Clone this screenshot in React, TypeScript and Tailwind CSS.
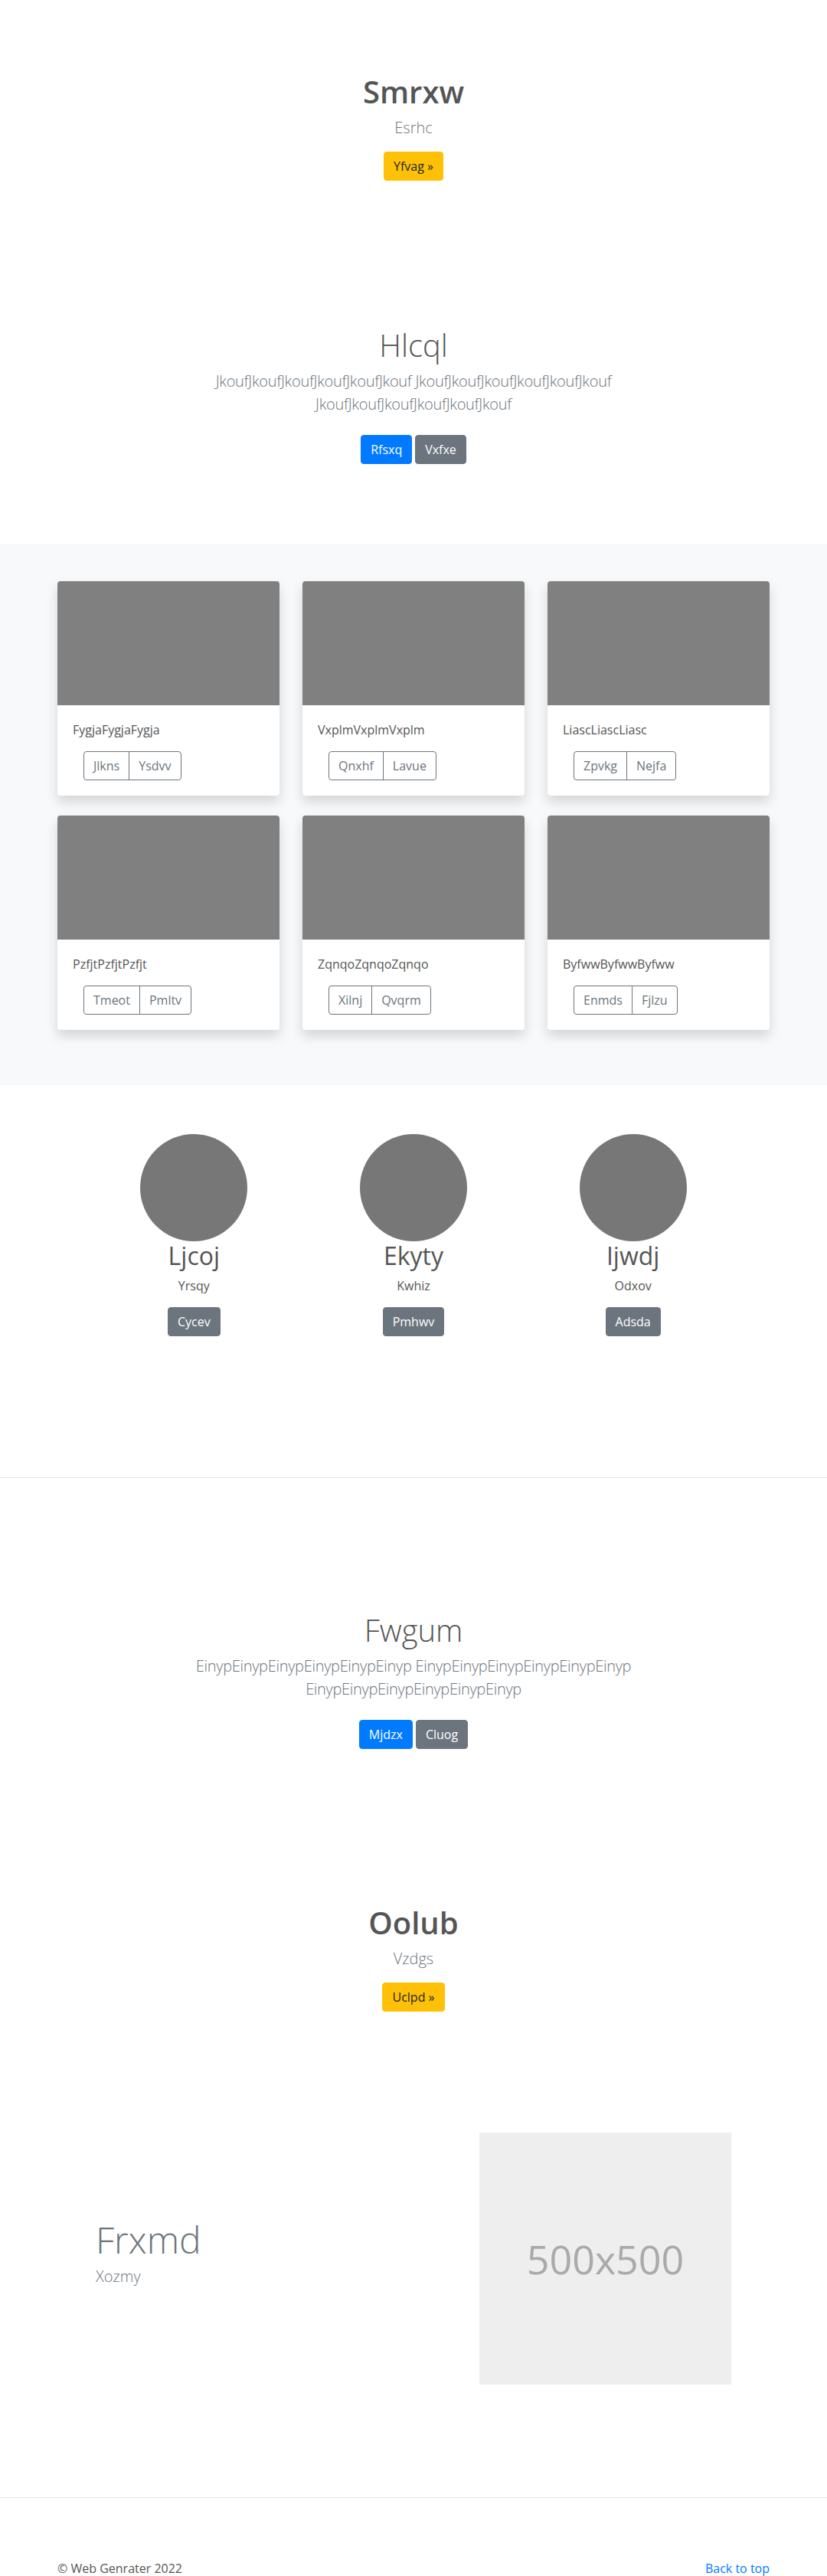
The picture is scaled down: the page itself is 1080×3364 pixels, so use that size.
const cards = [
  { title: 'FygjaFygjaFygja', a: 'Jlkns', b: 'Ysdvv' },
  { title: 'VxplmVxplmVxplm', a: 'Qnxhf', b: 'Lavue' },
  { title: 'LiascLiascLiasc', a: 'Zpvkg', b: 'Nejfa' },
  { title: 'PzfjtPzfjtPzfjt', a: 'Tmeot', b: 'Pmltv' },
  { title: 'ZqnqoZqnqoZqnqo', a: 'Xilnj', b: 'Qvqrm' },
  { title: 'ByfwwByfwwByfww', a: 'Enmds', b: 'Fjlzu' },
];

const team = [
  { name: 'Ljcoj', role: 'Yrsqy', btn: 'Cycev' },
  { name: 'Ekyty', role: 'Kwhiz', btn: 'Pmhwv' },
  { name: 'Ijwdj', role: 'Odxov', btn: 'Adsda' },
];

const btn = 'inline-block rounded-[4px] border px-3 py-[6px] text-base leading-6';

function Callout({ title, sub, cta, className }: { title: string; sub: string; cta: string; className: string }) {
  return (
    <section className={`text-center ${className}`}>
      <h1 className="mb-2 text-[40px] font-semibold leading-[1.2] text-[#555]">{title}</h1>
      <p className="mb-4 text-xl font-light leading-[1.5] text-[#6c757d]">{sub}</p>
      <button className={`${btn} border-[#ffc107] bg-[#ffc107] text-[#212529]`}>{cta}</button>
    </section>
  );
}

function Jumbo({ title, word, primary, secondary, className }: { title: string; word: string; primary: string; secondary: string; className: string }) {
  const chunk = word.repeat(6);
  return (
    <section className={`text-center ${className}`}>
      <h1 className="mb-2 text-[40px] font-light leading-[1.2] text-[#555]">{title}</h1>
      <p className="mx-auto max-w-[610px] text-xl font-light leading-[1.5] tracking-[-0.3px] text-[#6c757d]">
        {chunk} {chunk} {chunk}
      </p>
      <div className="mt-[25px] flex justify-center gap-1">
        <button className={`${btn} border-[#007bff] bg-[#007bff] text-white`}>{primary}</button>
        <button className={`${btn} border-[#6c757d] bg-[#6c757d] text-white`}>{secondary}</button>
      </div>
    </section>
  );
}

export default function App() {
  return (
    <div className="bg-white font-['Open_Sans',sans-serif] text-[#212529]">
      <Callout title="Smrxw" sub="Esrhc" cta="Yfvag »" className="pt-[96px] pb-[96px]" />

      <Jumbo title="Hlcql" word="Jkouf" primary="Rfsxq" secondary="Vxfxe" className="pt-[95px] pb-[104px]" />

      <section className="bg-[#f8f9fa] pt-[49px] pb-[72px]">
        <div className="mx-auto grid w-[930px] grid-cols-3 gap-x-[30px] gap-y-[26px]">
          {cards.map((c) => (
            <div key={c.title} className="overflow-hidden rounded-[4px] bg-white shadow-[0_8px_16px_rgba(0,0,0,0.15)]">
              <div className="h-[162px] bg-[#808080]" />
              <div className="p-5">
                <p className="mb-4 text-base leading-6 text-[#555]">{c.title}</p>
                <div className="ml-[14px] inline-flex">
                  <button className="rounded-l-[4px] border border-[#6c757d] px-3 py-[6px] text-base leading-6 text-[#6c757d]">
                    {c.a}
                  </button>
                  <button className="-ml-px rounded-r-[4px] border border-[#6c757d] px-3 py-[6px] text-base leading-6 text-[#6c757d]">
                    {c.b}
                  </button>
                </div>
              </div>
            </div>
          ))}
        </div>
      </section>

      <section className="border-b border-[#e3e3e3] pt-16 pb-[184px]">
        <div className="mx-auto grid w-[860px] grid-cols-3">
          {team.map((t) => (
            <div key={t.name} className="flex flex-col items-center text-center">
              <div className="h-[140px] w-[140px] rounded-full bg-[#777]" />
              <h2 className="mb-2 text-[32px] leading-[1.2] text-[#555]">{t.name}</h2>
              <p className="mb-4 text-base leading-6 text-[#555]">{t.role}</p>
              <button className={`${btn} border-[#6c757d] bg-[#6c757d] text-white`}>{t.btn}</button>
            </div>
          ))}
        </div>
      </section>

      <Jumbo title="Fwgum" word="Einyp" primary="Mjdzx" secondary="Cluog" className="pt-[175px] pb-[100px]" />

      <Callout title="Oolub" sub="Vzdgs" cta="Uclpd »" className="pt-[103px]" />

      <section className="pt-[158px] pb-[147px]">
        <div className="mx-auto flex w-[860px] items-center">
          <div className="w-[430px] px-[15px]">
            <h2 className="mb-1 text-5xl font-light leading-[1.2] text-[#6c757d]">Frxmd</h2>
            <p className="mb-4 text-xl font-light leading-[1.5] text-[#6c757d]">Xozmy</p>
          </div>
          <div className="flex w-[430px] justify-end px-[15px]">
            <div className="flex h-[329px] w-[329px] items-center justify-center bg-[#eee] text-[52px] text-[#aaa]">
              500x500
            </div>
          </div>
        </div>
      </section>

      <footer className="border-t border-[#e3e3e3] pt-20 pb-12">
        <div className="mx-auto flex w-[930px] justify-between text-base leading-6">
          <p className="text-[#555]">© Web Genrater 2022</p>
          <a href="#" className="text-[#007bff]">Back to top</a>
        </div>
      </footer>
    </div>
  );
}
